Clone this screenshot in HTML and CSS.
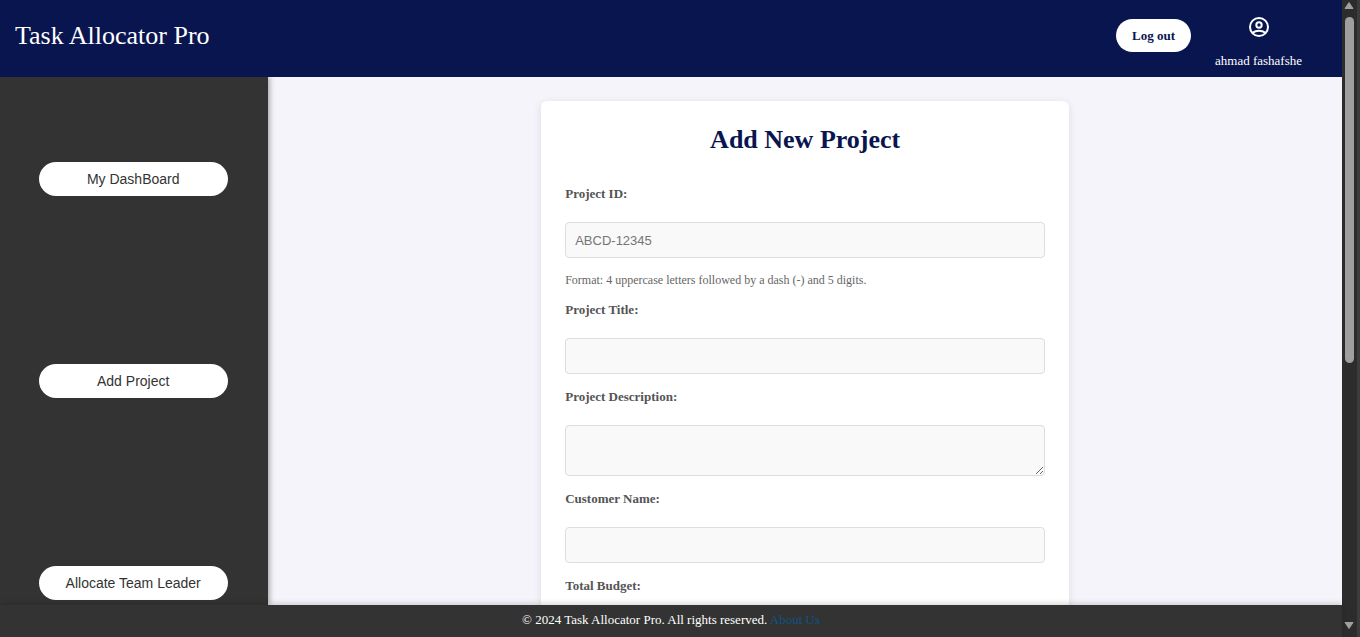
FILE: index.html
```html
<!DOCTYPE html>
<html lang="en">
<head>
<meta charset="utf-8">
<title>Task Allocator Pro</title>
<link rel="stylesheet" href="styles.css">
</head>
<body>
<div class="page">
  <header class="header">
    <h1 class="brand">Task Allocator Pro</h1>
    <div class="account">
      <button class="logout" type="button">Log out</button>
      <a class="profile" href="#profile">
        <svg class="profile-icon" viewBox="0 0 24 24" aria-hidden="true">
          <circle cx="12" cy="12" r="9"/>
          <circle cx="12" cy="10" r="2.7"/>
          <path d="M5.6 17.8c1.8-1.3 4-2 6.4-2s4.6.7 6.4 2"/>
        </svg>
        <span>ahmad fashafshe</span>
      </a>
    </div>
  </header>
  <div class="body">
    <nav class="sidebar">
      <button class="nav-button" type="button">My DashBoard</button>
      <button class="nav-button" type="button">Add Project</button>
      <button class="nav-button" type="button">Allocate Team Leader</button>
    </nav>
    <main class="content">
      <form class="card">
        <h2 class="card-title">Add New Project</h2>
        <label class="label" for="project-id">Project ID:</label>
        <input class="field" id="project-id" type="text" placeholder="ABCD-12345" aria-describedby="id-hint">
        <small class="hint" id="id-hint">Format: 4 uppercase letters followed by a dash (-) and 5 digits.</small>
        <label class="label" for="title">Project Title:</label>
        <input class="field" id="title" type="text">
        <label class="label" for="description">Project Description:</label>
        <textarea class="field field-area" id="description"></textarea>
        <label class="label" for="customer">Customer Name:</label>
        <input class="field" id="customer" type="text">
        <label class="label" for="budget">Total Budget:</label>
        <input class="field" id="budget" type="text">
      </form>
    </main>
  </div>
  <footer class="footer">
    <p class="footer-text">© 2024 Task Allocator Pro. All rights reserved. <a class="footer-link" href="#about">About Us</a></p>
  </footer>
</div>
<div class="scrollbar" aria-hidden="true">
  <svg class="arrow" viewBox="0 0 10 7"><path d="M5 0.5 9 6.5H1z"/></svg>
  <div class="track"><div class="thumb"></div></div>
  <svg class="arrow" viewBox="0 0 10 7"><path d="M5 6.5 9 0.5H1z"/></svg>
</div>
</body>
</html>
```
FILE: styles.css
```css
* {
  box-sizing: border-box;
}

body {
  display: flex;
  height: 100vh;
  margin: 0;
  overflow: hidden;
  background: #f4f4fa;
  font-family: "Liberation Serif", "Times New Roman", serif;
  font-size: 13px;
}

.page {
  display: flex;
  flex: 1;
  flex-direction: column;
  min-width: 0;
}

.header {
  display: flex;
  align-items: center;
  justify-content: space-between;
  flex: none;
  padding: 15px 40px 8px 15px;
  background: #09154f;
  color: #fff;
}

.brand {
  margin: 0;
  padding-bottom: 12px;
  font-size: 26px;
  font-weight: 400;
  line-height: 30px;
}

.account {
  display: flex;
  align-items: flex-start;
  gap: 24px;
}

.logout {
  height: 33px;
  margin-top: 4px;
  padding: 0 16px;
  border: 0;
  border-radius: 17px;
  background: #fff;
  color: #09154f;
  font: bold 13px "Liberation Serif", "Times New Roman", serif;
}

.profile {
  display: flex;
  flex-direction: column;
  align-items: center;
  gap: 14px;
  color: #fff;
  line-height: 16px;
  text-decoration: none;
}

.profile-icon {
  width: 24px;
  height: 24px;
  fill: none;
  stroke: #fff;
  stroke-width: 2;
}

.body {
  display: flex;
  flex: 1;
  min-height: 0;
  overflow: hidden;
}

.sidebar {
  display: flex;
  flex: 0 0 20%;
  flex-direction: column;
  align-items: center;
  gap: 168px;
  padding: 85px 2px 0 0;
  background: #333;
  box-shadow: 2px 0 5px rgba(0, 0, 0, 0.3);
}

.nav-button {
  flex: none;
  width: 71%;
  height: 34px;
  padding: 0;
  border: 0;
  border-radius: 17px;
  background: #fff;
  color: #333;
  font: 14px "Liberation Sans", Arial, sans-serif;
}

.content {
  flex: 1;
  padding: 24px;
}

.card {
  display: flex;
  flex-direction: column;
  max-width: 528px;
  margin: 0 auto;
  padding: 24px;
  border-radius: 6px;
  background: #fff;
  box-shadow: 0 2px 8px rgba(0, 0, 0, 0.1);
}

.card-title {
  margin: 0 0 29px;
  color: #09154f;
  font-size: 26px;
  line-height: 30px;
  text-align: center;
}

.label {
  margin-bottom: 18px;
  color: #555;
  font-weight: bold;
  line-height: 20px;
}

.field {
  flex: none;
  width: 100%;
  height: 36px;
  margin: 0 0 13px;
  padding: 8px 9px;
  border: 1px solid #ddd;
  border-radius: 4px;
  background: #f9f9f9;
  font: 13px "Liberation Sans", Arial, sans-serif;
}

.field-area {
  height: 51px;
}

.hint {
  margin-bottom: 11px;
  color: #666;
  font-size: 12px;
  line-height: 18px;
}

.footer {
  position: relative;
  flex: none;
  padding: 7px 0 9px;
  background: #333;
  box-shadow: 0 -2px 5px rgba(0, 0, 0, 0.15);
  color: #fff;
  text-align: center;
}

.footer-text {
  margin: 0;
  line-height: 16px;
}

.footer-link {
  color: #0d5486;
  text-decoration: none;
}

.scrollbar {
  display: flex;
  flex: 0 0 18px;
  flex-direction: column;
  align-items: center;
  padding: 2px 3px 8px 0;
  border-right: 3px solid #3c3c3c;
  background: #2c2c2c;
}

.arrow {
  width: 10px;
  height: 7px;
  margin-left: 2px;
  fill: #9f9f9f;
  stroke: #9f9f9f;
  stroke-linejoin: round;
}

.track {
  flex: 1;
  width: 9px;
  margin-left: 2px;
  padding: 8px 0;
}

.thumb {
  height: 58%;
  border-radius: 5px;
  background: #9f9f9f;
}
```
